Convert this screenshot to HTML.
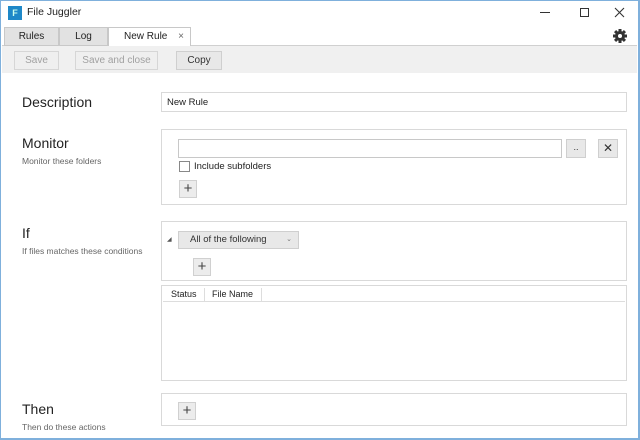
<!DOCTYPE html>
<html><head><meta charset="utf-8"><style>
*{box-sizing:border-box;margin:0;padding:0}
body{width:640px;height:440px;background:#fff;font-family:"Liberation Sans",sans-serif;position:relative;overflow:hidden;color:#222}
.a{position:absolute}
.btn{position:absolute;border:1px solid #cfcfcf;background:#e8e8e8;font-size:10px;text-align:center;color:#333}
.dis{color:#a0a0a0;background:#efefef;border-color:#d6d6d6}
.box{position:absolute;border:1px solid #d9d9d9;background:#fff}
.h{position:absolute;font-size:14px;color:#222}
.s{position:absolute;font-size:8.5px;color:#666}
.plus{position:absolute;width:18px;height:18px;border:1px solid #d0d0d0;background:#ececec;font-size:15px;line-height:15px;text-align:center;color:#444}
</style></head><body>
<div class="a" style="left:0;top:0;width:640px;height:440px;border:1px solid #7fb0dc;border-width:1px 2px 2px 1px"></div>
<div class="a" style="left:8px;top:6px;width:14px;height:14px;background:#1e88c8;color:#cfe;font-size:9px;font-weight:bold;text-align:center;line-height:14px">F</div>
<div class="a" style="left:27px;top:6px;font-size:10.5px">File Juggler</div>
<div class="a" style="left:540px;top:12px;width:10px;height:1px;background:#333"></div>
<div class="a" style="left:580px;top:8px;width:9px;height:9px;border:1px solid #333"></div>
<svg class="a" style="left:614px;top:7px" width="11" height="11" viewBox="0 0 11 11"><path d="M1 1L10 10M10 1L1 10" stroke="#333" stroke-width="1.1"/></svg>
<svg class="a" style="left:612px;top:28px" width="16" height="16" viewBox="0 0 16 16"><g fill="#333"><circle cx="8" cy="8" r="5"/><rect x="6.5" y="1" width="3" height="14"/><rect x="1" y="6.5" width="14" height="3"/><rect x="6.5" y="1" width="3" height="14" transform="rotate(45 8 8)"/><rect x="6.5" y="1" width="3" height="14" transform="rotate(-45 8 8)"/></g><circle cx="8" cy="8" r="2" fill="#fff"/></svg>
<div class="a" style="left:2px;top:45px;width:635px;height:1px;background:#d0d0d0"></div>
<div class="a" style="left:4px;top:27px;width:55px;height:19px;background:#e2e2e2;border:1px solid #c8c8c8;font-size:10px;text-align:center;line-height:17px">Rules</div>
<div class="a" style="left:59px;top:27px;width:49px;height:19px;background:#e2e2e2;border:1px solid #c8c8c8;font-size:10px;text-align:center;line-height:17px">Log</div>
<div class="a" style="left:108px;top:27px;width:83px;height:19px;background:#fff;border:1px solid #c8c8c8;border-bottom:none;font-size:10px;line-height:17px;padding-left:15px">New Rule <span style="margin-left:8px;color:#666">×</span></div>
<div class="a" style="left:2px;top:46px;width:635px;height:27px;background:#f0f0f0"></div>
<div class="btn dis" style="left:14px;top:51px;width:45px;height:19px;line-height:17px">Save</div>
<div class="btn dis" style="left:75px;top:51px;width:83px;height:19px;line-height:17px">Save and close</div>
<div class="btn" style="left:176px;top:51px;width:46px;height:19px;line-height:17px">Copy</div>

<div class="h" style="left:22px;top:94px">Description</div>
<div class="box" style="left:161px;top:92px;width:466px;height:20px;font-size:9.5px;padding:4px 5px">New Rule</div>

<div class="h" style="left:22px;top:135px">Monitor</div>
<div class="s" style="left:22px;top:156px">Monitor these folders</div>
<div class="box" style="left:161px;top:129px;width:466px;height:76px"></div>
<div class="box" style="left:178px;top:139px;width:384px;height:19px;border-color:#c8c8c8"></div>
<div class="btn" style="left:566px;top:139px;width:20px;height:19px;font-size:9px;line-height:15px">..</div>
<div class="btn" style="left:598px;top:139px;width:20px;height:19px;font-size:12px;line-height:17px">✕</div>
<div class="a" style="left:179px;top:161px;width:11px;height:11px;border:1px solid #888;background:#fff"></div>
<div class="a" style="left:194px;top:161px;font-size:9.5px">Include subfolders</div>
<div class="plus" style="left:179px;top:180px">+</div>

<div class="h" style="left:22px;top:225px">If</div>
<div class="s" style="left:22px;top:246px">If files matches these conditions</div>
<div class="box" style="left:161px;top:221px;width:466px;height:60px"></div>
<div class="a" style="left:167px;top:236px;font-size:6px;color:#555">◢</div>
<div class="btn" style="left:178px;top:231px;width:121px;height:18px;font-size:9.5px;line-height:16px;text-align:left;padding-left:11px">All of the following<span style="position:absolute;right:6px;font-size:7px;color:#777">⌄</span></div>
<div class="plus" style="left:193px;top:258px">+</div>
<div class="box" style="left:161px;top:285px;width:466px;height:96px"></div>
<div class="a" style="left:163px;top:301px;width:462px;height:1px;background:#ddd"></div>
<div class="a" style="left:204px;top:288px;width:1px;height:13px;background:#ddd"></div>
<div class="a" style="left:261px;top:288px;width:1px;height:13px;background:#ddd"></div>
<div class="a" style="left:171px;top:289px;font-size:9px">Status</div>
<div class="a" style="left:212px;top:289px;font-size:9px">File Name</div>

<div class="h" style="left:22px;top:401px">Then</div>
<div class="s" style="left:22px;top:422px">Then do these actions</div>
<div class="box" style="left:161px;top:393px;width:466px;height:33px"></div>
<div class="plus" style="left:178px;top:402px">+</div>
</body></html>
